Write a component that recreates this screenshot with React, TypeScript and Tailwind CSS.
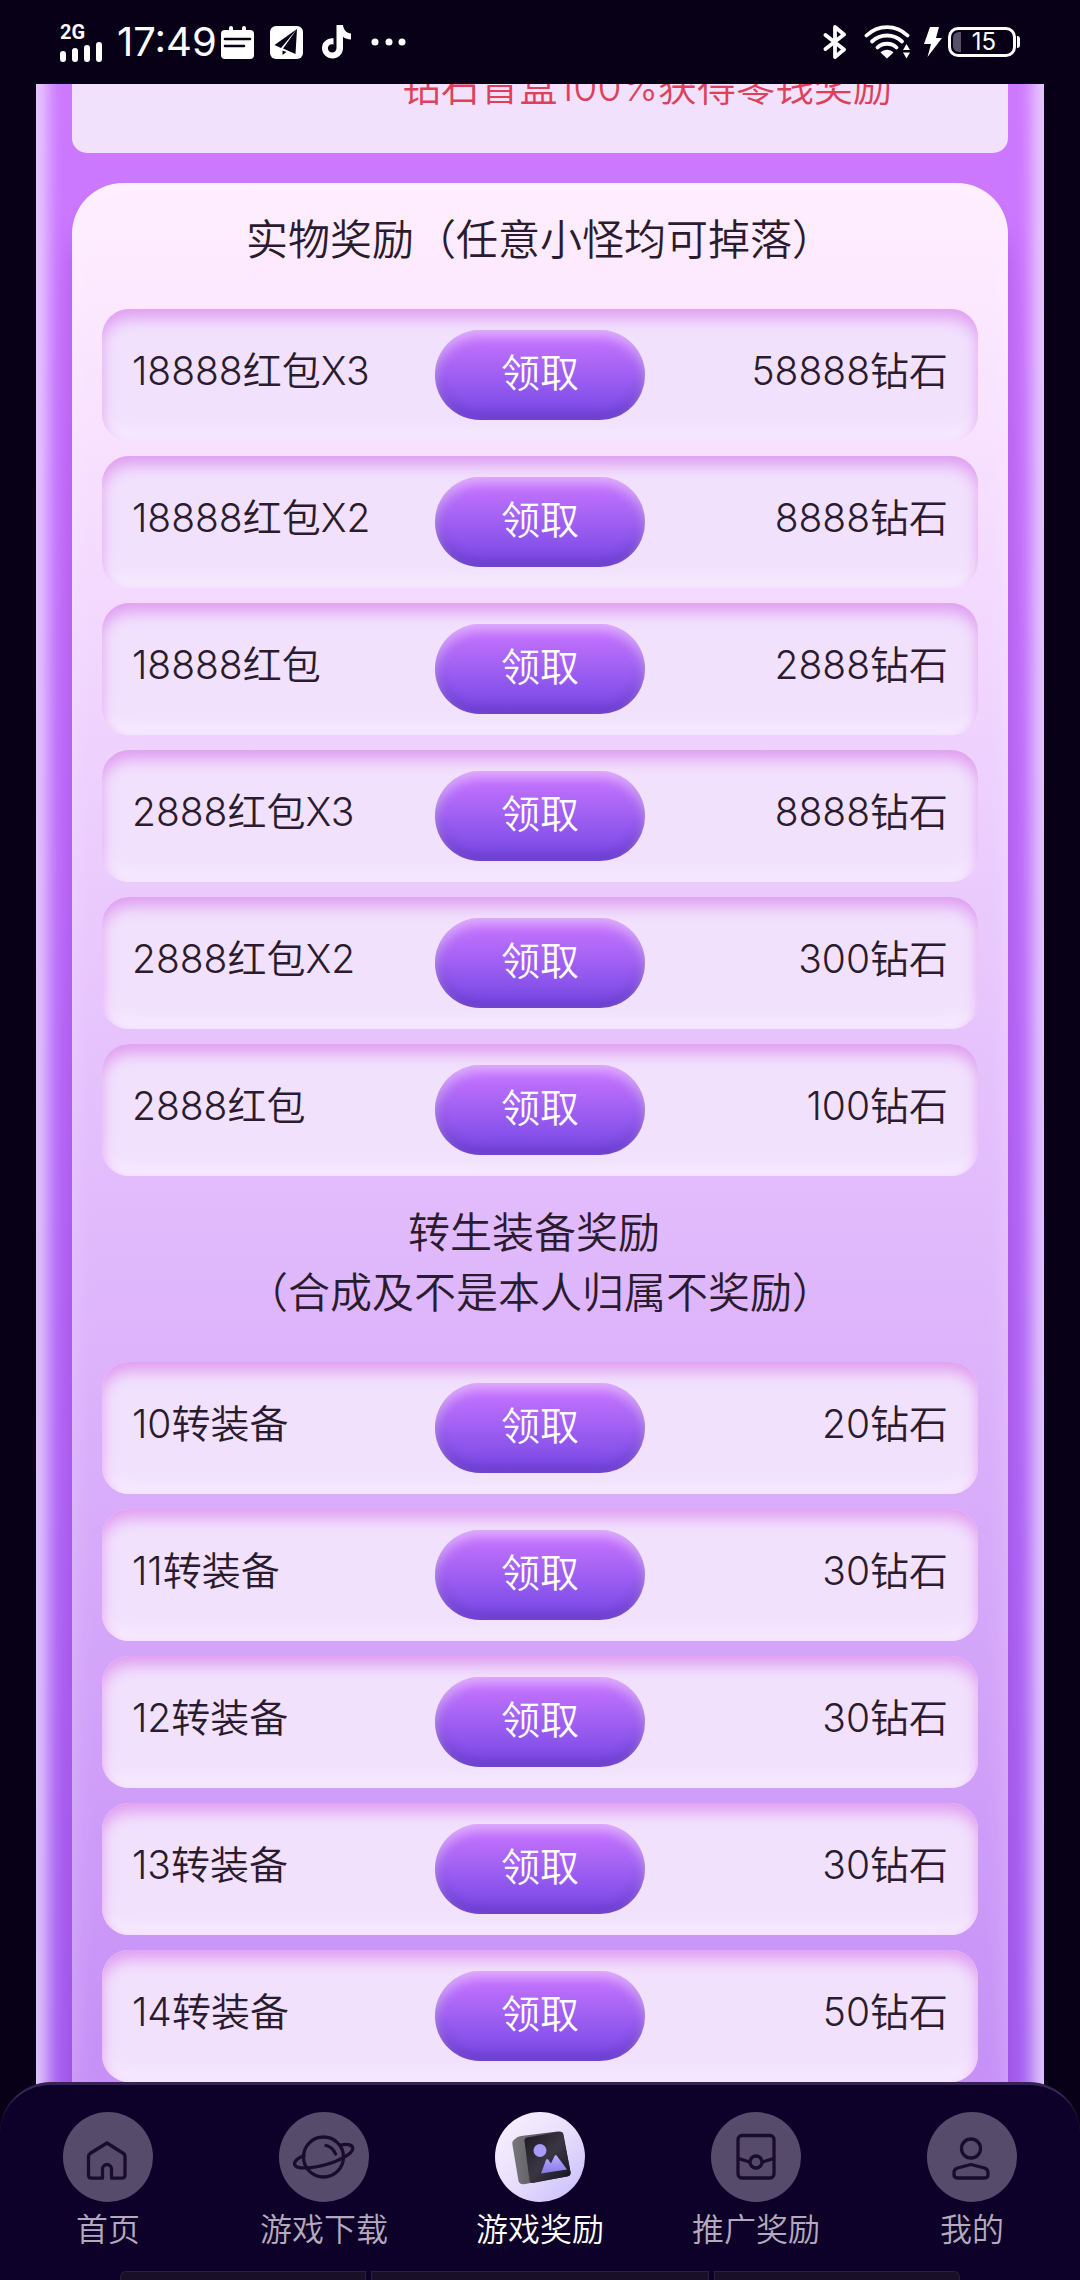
import React from 'react';

type Reward = { name: string; prize: string };

const itemRewards: Reward[] = [
  { name: '18888红包X3', prize: '58888钻石' },
  { name: '18888红包X2', prize: '8888钻石' },
  { name: '18888红包', prize: '2888钻石' },
  { name: '2888红包X3', prize: '8888钻石' },
  { name: '2888红包X2', prize: '300钻石' },
  { name: '2888红包', prize: '100钻石' },
];

const gearRewards: Reward[] = [
  { name: '10转装备', prize: '20钻石' },
  { name: '11转装备', prize: '30钻石' },
  { name: '12转装备', prize: '30钻石' },
  { name: '13转装备', prize: '30钻石' },
  { name: '14转装备', prize: '50钻石' },
];

const StatusBar: React.FC = () => (
  <header className="relative z-10 flex h-[84px] shrink-0 items-center justify-between bg-[#070017] px-[60px] text-white">
    <div className="flex items-center">
      <div className="mr-[14px] w-[43px]">
        <div className="font-['Roboto'] text-[20px] font-bold leading-[18px]">2G</div>
        <svg className="block" width="43" height="21" viewBox="0 0 43 21" fill="#fff">
          <rect x="0" y="10" width="6" height="11" rx="3" />
          <rect x="12" y="7" width="6" height="14" rx="3" />
          <rect x="24" y="4" width="6" height="17" rx="3" />
          <rect x="36" y="1" width="6" height="20" rx="3" />
        </svg>
      </div>
      <span className="mr-2 w-[96px] whitespace-nowrap font-['Inter'] text-[40px] font-normal leading-[48px]">17:49</span>
      <div className="flex items-center gap-4">
        <svg width="33" height="33" viewBox="0 0 33 33">
          <rect x="0" y="4" width="33" height="29" rx="4" fill="#fff" />
          <path d="M10 2v5M23 2v5" stroke="#fff" strokeWidth="4" strokeLinecap="round" />
          <path d="M4 13h25M4 20h19" stroke="#070017" strokeWidth="2.6" strokeLinecap="round" />
        </svg>
        <svg width="33" height="33" viewBox="0 0 33 33">
          <rect width="33" height="33" rx="6" fill="#fff" />
          <path d="M27 3 4.500 19l6.500 3zM27 3 13 22.500 25.500 28zM12.500 24.500v4.500l4-3z" fill="#070017" />
        </svg>
        <svg width="36" height="34" viewBox="0 0 36 34">
          <path
            d="M17.500 0h6.500c.5 5 3.600 8 8 8.500v6c-3-.1-5.800-1-8-2.700V23c0 6-4.700 10.500-10.400 10.500S3 29 3 23.200C3 17.200 8 12.700 14.500 13.200v6.200c-3.200-.8-5.600 1-5.600 3.800 0 2.500 2 4.300 4.300 4.300 2.600 0 4.300-1.800 4.300-4.700z"
            fill="#fff"
          />
        </svg>
        <svg width="36" height="8" viewBox="0 0 36 8" fill="#fff">
          <circle cx="4" cy="4" r="3.500" />
          <circle cx="18" cy="4" r="3.500" />
          <circle cx="31" cy="4" r="3.500" />
        </svg>
      </div>
    </div>

    <div className="flex items-center">
      <svg className="mr-[17px]" width="24" height="36" viewBox="0 0 24 36" fill="none" stroke="#fff" strokeWidth="3.800" strokeLinejoin="round" strokeLinecap="round">
        <path d="M2.500 11 21 25.500 12 33V3l9 7.500L2.500 25" />
      </svg>
      <svg className="mr-[14px]" width="46" height="34" viewBox="0 0 46 34">
        <g fill="none" stroke="#fff" strokeWidth="3.800" strokeLinecap="round">
          <path d="M2.500 10.500C14-.8 32-.8 43.500 10.500" />
          <path d="M8 16.500c8.500-8 21.500-8 30 0" />
          <path d="M13.500 22.500c5-5 14-5 19 0" />
        </g>
        <path d="M16.500 27.500c3.800-3.600 9.200-3.600 13 0L23 33.500z" fill="#fff" />
        <path d="M42.500 19l3.500 6h-7zM42.500 33.500l3.500-6h-7z" fill="#fff" />
      </svg>
      <svg className="mr-[6px]" width="18" height="30" viewBox="0 0 18 30" fill="#fff">
        <path d="M6 0h9l-3 11h6L3.500 30 7 17H0z" />
      </svg>
      <div className="flex items-center">
        <div className="flex h-[30px] w-[68px] items-center rounded-[10px] border-[3px] border-white p-[2px]">
          <span className="h-full w-2 rounded-l-[6px] bg-[#57506a]" />
          <span className="flex-1 pr-1 text-center font-['Inter'] text-[24px] font-normal leading-[24px]">15</span>
        </div>
        <span className="ml-px h-3 w-[3px] rounded-r-full bg-white" />
      </div>
    </div>
  </header>
);

const RewardList: React.FC<{ rewards: Reward[] }> = ({ rewards }) => (
  <ul className="flex flex-col gap-[15px]">
    {rewards.map((reward) => (
      <li
        key={reward.name}
        className="grid h-[132px] grid-cols-[1fr_210px_1fr] items-center rounded-[27px] bg-[#f1e1fd] px-[30px] shadow-[inset_0_9px_15px_#df9cf0,inset_0_-9px_15px_#f8edff]"
      >
        <span className="pb-2">{reward.name}</span>
        <button
          type="button"
          className="h-[90px] rounded-full bg-linear-to-b from-[#cd76ff] to-[#7445e4] pb-1 text-white shadow-[inset_0_6px_12px_rgba(255,255,255,0.45),inset_0_-6px_12px_rgba(60,20,110,0.25)]"
        >
          领取
        </button>
        <span className="pb-2 text-right">{reward.prize}</span>
      </li>
    ))}
  </ul>
);

const HomeIcon = () => (
  <path d="M44 31 60.500 41.500q1.500 1 1.500 3V63q0 3.200-3.200 3.200H48.500V57a4.500 4.500 0 0 0-9 0v9.200H28.700q-3.200 0-3.200-3.200V44.500q0-2 1.500-3z" />
);

const PlanetIcon = () => (
  <>
    <circle cx="44.500" cy="45" r="20" />
    <path d="M25 43.500C18 46 14.500 50 15.800 53c2.200 4.500 17 3.500 31.500-.5S73 41.500 73.700 37c.5-4-4.700-5.500-11.700-4" />
    <path d="M47 33.500c4.500 1 7.800 4.200 9.500 8.500" />
  </>
);

const PacketIcon = () => (
  <>
    <rect x="27" y="23.500" width="36" height="42.500" rx="4" />
    <path d="M27.500 46.500 38.500 50M62.500 46.500 51.500 50" />
    <circle cx="45" cy="50" r="6" />
  </>
);

const UserIcon = () => (
  <>
    <circle cx="44" cy="36.500" r="9.500" />
    <path d="M44 52.500 57.500 56q3.500 1.200 3.500 4.500v2q0 3.500-3.500 3.500h-27q-3.500 0-3.500-3.500v-2q0-3.300 3.500-4.500z" />
  </>
);

// 3D gallery picture used for the active tab
const RewardIcon = () => (
  <svg className="size-full" viewBox="0 0 90 90">
    <defs>
      <linearGradient id="side" x1="0" y1="0" x2="1" y2="0">
        <stop offset="0" stopColor="#77777b" />
        <stop offset="0.500" stopColor="#58575c" />
        <stop offset="1" stopColor="#201d24" />
      </linearGradient>
      <linearGradient id="front" x1="0" y1="0" x2="1" y2="1">
        <stop offset="0" stopColor="#1b1821" />
        <stop offset="0.500" stopColor="#3b3643" />
        <stop offset="1" stopColor="#15121a" />
      </linearGradient>
      <linearGradient id="peak" x1="0" y1="0" x2="0" y2="1">
        <stop offset="0" stopColor="#bcaefc" />
        <stop offset="1" stopColor="#8578ea" />
      </linearGradient>
    </defs>
    <path d="M20 27q2-2.500 6-3L63 19.500q5-.5 5.500 3L75.500 60q.5 4-3 4.500L30 72q-5 1-6.500-3L17.300 32q-.3-3 2.700-5z" fill="url(#side)" />
    <path d="M32 25.500 64 20q3.500-.5 4 2.500L75.500 60q.5 3.500-3 4.200L38 71q-3 .5-3.500-2.500L29.500 29q-.3-3 2.500-3.500z" fill="url(#front)" />
    <circle cx="45" cy="38.500" r="6.500" fill="#a79bfb" />
    <path d="M46 61.500 51 48q1-2 2.300-.3L56 51.500 59.500 44q1-2 2.300-.2L72 57.500z" fill="url(#peak)" />
  </svg>
);

const tabs = [
  { label: '首页', icon: <HomeIcon /> },
  { label: '游戏下载', icon: <PlanetIcon /> },
  { label: '游戏奖励', icon: null },
  { label: '推广奖励', icon: <PacketIcon /> },
  { label: '我的', icon: <UserIcon /> },
];

const TabBar: React.FC = () => (
  <nav className="relative z-10 -mt-[51px] shrink-0 overflow-hidden rounded-t-[51px] border-t-[3px] border-[#35244f] bg-[#0d0029] pt-[27px]">
    <div className="grid grid-cols-5">
      {tabs.map((tab) => (
        <a
          key={tab.label}
          href="#"
          className={`flex flex-col items-center gap-2 text-[32px] leading-[40px] ${tab.icon ? 'text-[#b5aabd]' : 'text-white'}`}
        >
          {tab.icon ? (
            <span className="size-[90px] rounded-full bg-[#574b6b]">
              <svg
                className="size-full"
                viewBox="0 0 90 90"
                fill="none"
                stroke="#190c2c"
                strokeWidth="3.300"
                strokeLinecap="round"
                strokeLinejoin="round"
              >
                {tab.icon}
              </svg>
            </span>
          ) : (
            <span className="size-[90px] rounded-full bg-linear-to-br from-[#fbf2ff] via-[#e9dffc] to-[#c5bafa]">
              <RewardIcon />
            </span>
          )}
          {tab.label}
        </a>
      ))}
    </div>
    <div className="mt-[21px] grid h-[9px] grid-cols-[246px_1fr_246px] gap-[5px] px-[120px]">
      <span className="rounded-tl-md border-x border-t border-[#2a1f3c] bg-[#190f26]" />
      <span className="border-x border-t border-[#2a1f3c] bg-[#190f26]" />
      <span className="rounded-tr-md border-x border-t border-[#2a1f3c] bg-[#190f26]" />
    </div>
  </nav>
);

const App: React.FC = () => {
  return (
    <div className="flex h-screen flex-col overflow-hidden bg-[#070017] font-['Inter','Noto_Sans_CJK_SC',sans-serif] text-[39px] font-[350] text-[#2b1b2e]">
      <StatusBar />
      <main className="min-h-0 flex-1 overflow-hidden px-9">
        <div className="min-h-full bg-linear-to-b from-[#ce79ff] via-[#b86cfa] to-[#a562f2] px-9 shadow-[inset_12px_0_15px_rgba(238,220,255,0.8),inset_-12px_0_15px_rgba(238,220,255,0.8)]">
          <section className="-mt-[27px] rounded-b-[15px] bg-[#f1e1fd] pb-9 pl-[330px] leading-[60px] text-[#dd4058]">
            钻石盲盒100%获得零钱奖励
          </section>
          <section className="mt-[30px] rounded-t-[51px] bg-linear-to-b from-[#ffeeff] via-[#deb5fb] via-58% to-[#c48df6] px-[30px] pb-[60px] shadow-[0_36px_24px_rgba(140,30,190,0.35),inset_0_0_24px_rgba(255,255,255,0.25)]">
            <h2 className="pt-[27px] pb-[39px] text-center text-[42px] leading-[60px]">
              实物奖励（任意小怪均可掉落）
            </h2>
            <RewardList rewards={itemRewards} />
            <h2 className="pt-[27px] pb-[39px] text-center text-[42px] leading-[60px]">
              转生装备奖励&nbsp;
              <br />
              （合成及不是本人归属不奖励）
            </h2>
            <RewardList rewards={gearRewards} />
          </section>
        </div>
      </main>
      <TabBar />
    </div>
  );
};

export default App;
